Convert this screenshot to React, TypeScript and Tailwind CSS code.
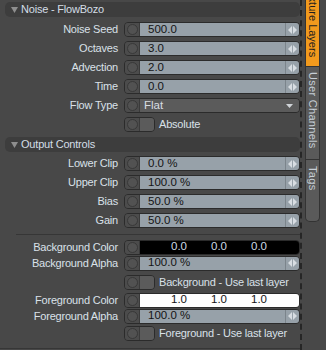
import React from 'react';

const font = { fontFamily: '"Liberation Sans", Arial, sans-serif' };

// small left/right drag arrows at the end of numeric fields
const Arrows = () => (
  <div className="w-[14px] h-full flex items-center justify-center border-l border-[#7b848b]">
    <svg width="9" height="8" viewBox="0 0 9 8">
      <polygon points="0,4 4,0 4,8" fill="#d8dde2" />
      <polygon points="5,0 9,4 5,8" fill="#d8dde2" />
    </svg>
  </div>
);

const Knob = () => (
  <div className="w-[15px] h-full shrink-0 flex items-center justify-center bg-[#4c4c4c] border-r border-[#3a3a3a]">
    <div className="w-[11px] h-[11px] rounded-full border border-[#393939] bg-[#525252]" />
  </div>
);

const Box = ({ children, className = '' }: { children?: React.ReactNode; className?: string }) => (
  <div className={`w-[176px] h-[15px] flex rounded-[4px] border border-[#2b2b2b] overflow-hidden ${className}`}>
    <Knob />
    {children}
  </div>
);

const Row = ({ label, h = 'h-[19px]', children }: { label?: string; h?: string; children: React.ReactNode }) => (
  <div className={`${h} flex items-center`}>
    <div className="w-[119px] text-right pr-[1px] text-[11px] tracking-[-0.2px] text-[#dae1e8] leading-none whitespace-nowrap">
      {label}
    </div>
    <div className="ml-[5px]">{children}</div>
  </div>
);

const NumField = ({ label, value }: { label: string; value: string }) => (
  <Row label={label}>
    <Box>
      <div className="flex-1 bg-[#97a1a9] flex items-center pl-[8px] text-[11.5px] text-[#141414] leading-none">{value}</div>
      <div className="bg-[#97a1a9] h-full">
        <Arrows />
      </div>
    </Box>
  </Row>
);

const Toggle = ({ text, h = 'h-[19px]' }: { text: string; h?: string }) => (
  <div className={`${h} flex items-center pl-[124px]`}>
    <div className="w-[31px] h-[15px] flex rounded-[4px] border border-[#2b2b2b] overflow-hidden">
      <Knob />
      <div className="flex-1 bg-[#5b5b5b]" />
    </div>
    <span className="ml-[4px] text-[11px] tracking-[-0.2px] text-[#dae1e8] leading-none whitespace-nowrap">{text}</span>
  </div>
);

const Header = ({ title }: { title: string }) => (
  <div className="ml-[5px] h-[15px] rounded-[5px] bg-[#3d3d3d] flex items-center">
    <svg width="7" height="6" viewBox="0 0 7 6" className="ml-[6px]">
      <polygon points="0,0 7,0 3.5,6" fill="#8e8e8e" />
    </svg>
    <span className="ml-[3px] text-[11px] tracking-[-0.2px] text-[#d4dde6] leading-none">{title}</span>
  </div>
);

const ColorRow = ({ label, dark, values }: { label: string; dark: boolean; values: string[] }) => (
  <Row label={label} h="h-[16px]">
    <Box>
      <div className={`flex-1 flex items-center pl-[31px] text-[11.5px] leading-none ${dark ? 'bg-black text-[#cfdbe6]' : 'bg-white text-[#141414]'}`}>
        {values.map((v, i) => (
          <span key={i} className="w-[40px]">{v}</span>
        ))}
      </div>
    </Box>
  </Row>
);

const AlphaRow = ({ label }: { label: string }) => (
  <Row label={label} h="h-[16px]">
    <Box>
      <div className="flex-1 bg-[#97a1a9] flex items-center pl-[8px] text-[11.5px] text-[#141414] leading-none">100.0 %</div>
      <div className="bg-[#97a1a9] h-full">
        <Arrows />
      </div>
    </Box>
  </Row>
);

const Tab = ({ text, className }: { text: string; className: string }) => (
  <div className={`w-[15px] flex justify-center overflow-hidden border-x border-b border-[#333] ${className}`}>
    <span className="[writing-mode:vertical-rl] text-[11px] tracking-[0.3px] leading-none whitespace-nowrap">{text}</span>
  </div>
);

export default function App() {
  return (
    <div className="w-[326px] h-[350px] bg-[#484848] flex overflow-hidden" style={font}>
      {/* Properties panel */}
      <div className="w-[300px] pt-[2px] flex flex-col">
        <Header title="Noise - FlowBozo" />
        <div className="mt-[3px]">
          <NumField label="Noise Seed" value="500.0" />
          <NumField label="Octaves" value="3.0" />
          <NumField label="Advection" value="2.0" />
          <NumField label="Time" value="0.0" />
          <Row label="Flow Type">
            <Box>
              <div className="flex-1 bg-[#5b5b5b] flex items-center justify-between pl-[4px] pr-[6px] text-[11.5px] text-[#d8dde2] leading-none">
                <span>Flat</span>
                <svg width="7" height="4" viewBox="0 0 7 4">
                  <polygon points="0,0 7,0 3.5,4" fill="#d0d4d8" />
                </svg>
              </div>
            </Box>
          </Row>
          <Toggle text="Absolute" />
        </div>

        <div className="mt-[3px]">
          <Header title="Output Controls" />
        </div>
        <div className="mt-[2px]">
          <NumField label="Lower Clip" value="0.0 %" />
          <NumField label="Upper Clip" value="100.0 %" />
          <NumField label="Bias" value="50.0 %" />
          <NumField label="Gain" value="50.0 %" />
        </div>

        <div className="h-[9px] flex items-center pl-[16px]">
          <div className="flex-1 h-[1px] bg-[#363636]" />
        </div>

        <ColorRow label="Background Color" dark values={['0.0', '0.0', '0.0']} />
        <AlphaRow label="Background Alpha" />
        <div className="mt-[2px]">
          <Toggle text="Background - Use last layer" />
        </div>
        <ColorRow label="Foreground Color" dark={false} values={['1.0', '1.0', '1.0']} />
        <AlphaRow label="Foreground Alpha" />
        <Toggle text="Foreground - Use last layer" />

        <div className="mt-auto mb-[1px] h-[1px] bg-[#363636]" />
      </div>

      {/* Splitter */}
      <div className="w-[2px] h-full border-l-2 border-dashed border-[#262626]" />

      {/* Tab strip */}
      <div className="pl-[3px] flex flex-col">
        <div className="w-[15px] h-[67px] bg-[#f29a1d] flex flex-col justify-end items-center pb-[9px] overflow-hidden border-x border-b border-[#333]">
          <span className="[writing-mode:vertical-rl] text-[11px] leading-none whitespace-nowrap text-[#1e1e1e]">Texture Layers</span>
        </div>
        <Tab text="User Channels" className="h-[93px] bg-[#5a5a5a] text-[#c6ced6] pt-[5px]" />
        <Tab text="Tags" className="h-[62px] bg-[#5a5a5a] text-[#c6ced6] pt-[6px] rounded-b-[5px]" />
      </div>
    </div>
  );
}
